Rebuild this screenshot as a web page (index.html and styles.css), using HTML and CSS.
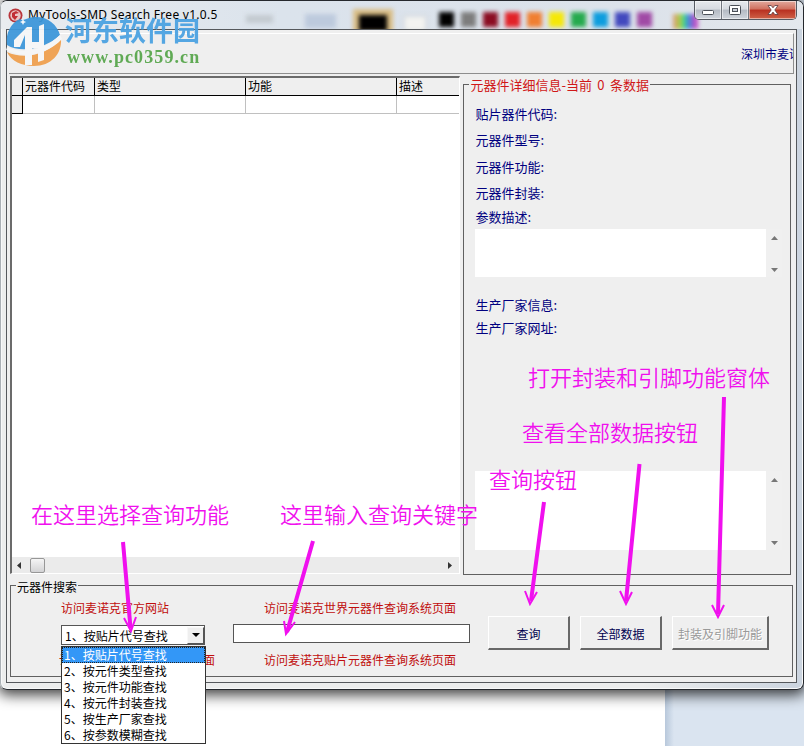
FILE: index.html
```html
<!DOCTYPE html>
<html lang="zh-CN">

<head>
  <meta charset="utf-8">
  <title>MyTools-SMD Search Free v1.0.5</title>
  <link rel="stylesheet" href="styles.css">
</head>

<body>
  <div class="desktop-side"></div>

  <div class="window">
    <div class="titlebar">
      <div class="glass">
        <span class="smudge"></span>
        <span class="smudge wide"></span>
        <span class="picked"></span>
        <span class="blank"></span>
        <div class="swatches">
          <span class="black"></span>
          <span class="gray"></span>
          <span class="maroon"></span>
          <span class="red"></span>
          <span class="orange"></span>
          <span class="yellow"></span>
          <span class="green"></span>
          <span class="cyan"></span>
          <span class="indigo"></span>
          <span class="purple"></span>
        </div>
        <span class="rainbow"></span>
      </div>
      <svg class="app-icon" width="15" height="15" viewBox="0 0 15 15">
        <circle cx="7.5" cy="7.5" r="7" fill="#b9353b"/>
        <circle cx="7.5" cy="7.5" r="5.2" fill="#e9c5c6"/>
        <path d="M4 5l4-2 3 2-4 1 0 2 3 0-3 4-3-3z" fill="#c22c35"/>
      </svg>
      <div class="title">MyTools-SMD Search Free v1.0.5</div>
      <div class="caption-buttons">
        <div class="caption-button min">
          <svg width="13" height="6" viewBox="0 0 13 6"><rect x=".5" y=".5" width="11" height="4" rx="1" fill="#fff" stroke="#4b5058"/></svg>
        </div>
        <div class="caption-button max">
          <svg width="12" height="10" viewBox="0 0 12 10"><rect x=".5" y=".5" width="11" height="9" rx="1" fill="#fff" stroke="#4b5058"/><rect x="3.5" y="3.5" width="5" height="3" fill="#c9ced6" stroke="#4b5058"/></svg>
        </div>
        <div class="caption-button close">
          <svg width="12" height="10" viewBox="0 0 12 10"><path d="M1 .5h3.200L6 2.800 7.800 .5H11L7.800 5l3.200 4.500H7.800L6 7.100 4.200 9.500H1L4.200 5z" fill="#fff" stroke="#5a3a3e" stroke-width=".8"/></svg>
        </div>
      </div>
    </div>

    <div class="client">
      <div class="banner"><span class="company">深圳市麦诺</span></div>

      <div class="main">
        <div class="grid">
          <div class="grid-row head">
            <div></div>
            <div>元器件代码</div>
            <div>类型</div>
            <div>功能</div>
            <div>描述</div>
          </div>
          <div class="grid-row">
            <div></div>
            <div></div>
            <div></div>
            <div></div>
            <div></div>
          </div>
          <div class="grid-space"></div>
          <div class="hscroll">
            <svg width="4" height="7" viewBox="0 0 4 7"><path d="M4 0v7L0 3.5z" fill="#333"/></svg>
            <span class="thumb"></span>
            <svg width="4" height="7" viewBox="0 0 4 7"><path d="M0 0v7l4-3.5z" fill="#333"/></svg>
          </div>
        </div>

        <div class="group details">
          <div class="legend">元器件详细信息-当前 0 条数据</div>
          <div class="label">贴片器件代码:</div>
          <div class="label">元器件型号:</div>
          <div class="label">元器件功能:</div>
          <div class="label">元器件封装:</div>
          <div class="label short">参数描述:</div>
          <div class="memo">
            <div class="memo-text"></div>
            <div class="vscroll">
              <svg width="7" height="4" viewBox="0 0 7 4"><path d="M0 4h7L3.500 0z" fill="#777"/></svg>
              <svg width="7" height="4" viewBox="0 0 7 4"><path d="M0 0h7L3.500 4z" fill="#777"/></svg>
            </div>
          </div>
          <div class="label maker">生产厂家信息:</div>
          <div class="label maker">生产厂家网址:</div>
          <div class="memo tall">
            <div class="memo-text"></div>
            <div class="vscroll">
              <svg width="7" height="4" viewBox="0 0 7 4"><path d="M0 4h7L3.500 0z" fill="#777"/></svg>
              <svg width="7" height="4" viewBox="0 0 7 4"><path d="M0 0h7L3.500 4z" fill="#777"/></svg>
            </div>
          </div>
        </div>
      </div>

      <div class="group search">
        <div class="legend">元器件搜索</div>
        <div class="search-col mode">
          <div class="link">访问麦诺克官方网站</div>
          <div class="select">
            <span>1、按贴片代号查找</span>
            <div class="select-button">
              <svg width="8" height="4" viewBox="0 0 8 4"><path d="M0 0h8L4 4z" fill="#000"/></svg>
            </div>
            <div class="options">
              <div class="option selected">1、按贴片代号查找</div>
              <div class="option">2、按元件类型查找</div>
              <div class="option">3、按元件功能查找</div>
              <div class="option">4、按元件封装查找</div>
              <div class="option">5、按生产厂家查找</div>
              <div class="option">6、按参数模糊查找</div>
            </div>
          </div>
          <div class="link last">访问麦诺克元件查询系统页面</div>
        </div>
        <div class="search-col keyword">
          <div class="link">访问麦诺克世界元器件查询系统页面</div>
          <div class="input"></div>
          <div class="link last">访问麦诺克贴片元器件查询系统页面</div>
        </div>
        <div class="buttons">
          <div class="button">查询</div>
          <div class="button">全部数据</div>
          <div class="button disabled">封装及引脚功能</div>
        </div>
      </div>
    </div>
  </div>

  <!-- site watermark -->
  <div class="watermark">
    <svg width="58" height="54" viewBox="0 0 58 54">
      <path d="M2 31C0 16 9 7 15 5c3 3 8-2 14-2 13-1 23 7 26 18C42 34 16 40 2 31z" fill="#3d97da"/>
      <path d="M2 38c17 8 40 3 54-13 1 15-10 27-27 27C17 52 6 47 2 38z" fill="#f0a04e"/>
      <path d="M9 26L22 13h5v15h7V12l5-2v36l-6 2V34h-6v17h-7V21l-5 12H9z" fill="#f6f7f8"/>
      <path d="M2 33c16 8 38 3 53-12l2 4C42 41 18 45 1 36z" fill="#f6f7f8"/>
      <path d="M18 5l1 2 2 1-2 1-1 2-1-2-2-1 2-1z" fill="#f5f8fb"/>
    </svg>
    <div class="watermark-text">
      <div class="watermark-name">河东软件园</div>
      <div class="watermark-url">www.pc0359.cn</div>
    </div>
  </div>

  <!-- callouts drawn over the window -->
  <div class="note note-mode">在这里选择查询功能</div>
  <div class="note note-keyword">这里输入查询关键字</div>
  <div class="note note-query">查询按钮</div>
  <div class="note note-all">查看全部数据按钮</div>
  <div class="note note-package">打开封装和引脚功能窗体</div>
  <svg class="arrows" width="804" height="746" viewBox="0 0 804 746">
    <path d="M123 542L130.500 628M313 541L287 632M544 502L531 601M639.500 464L626 601M724 397L718 614"/>
    <path class="tip" d="M124 618l7 13 5-14M284 621l2 13 9-12M525 591l5 13 7-12M620 591l6 13 6-12M712 605l6 12 6-12"/>
  </svg>
</body>

</html>
```
FILE: styles.css
```css
* {
  margin: 0;
  padding: 0;
  box-sizing: border-box;
}

body {
  position: relative;
  width: 804px;
  height: 746px;
  overflow: hidden;
  background: #fff;
  font-family: "Noto Sans CJK SC", sans-serif;
  font-size: 12px;
  color: #000;
}

svg {
  display: block;
}

.desktop-side {
  position: absolute;
  left: 665px;
  right: 0;
  top: 0;
  bottom: 0;
  background: linear-gradient(90deg, #b8c8db, #dae4f0 9px);
}

/* window frame */
.window {
  position: relative;
  width: 804px;
  height: 690px;
  border: 1px solid #25282d;
  border-left-color: #aab0b5;
  border-radius: 7px;
  background: linear-gradient(90deg, #eceded 0, #eceded 80%, #cbd4df);
  box-shadow: 0 3px 14px 2px rgba(0, 0, 0, 0.75), inset 0 0 0 1px #f7f8f9;
}

.titlebar {
  position: relative;
  display: flex;
  align-items: flex-start;
  height: 28px;
  padding-left: 7px;
  overflow: hidden;
  border-radius: 6px 6px 0 0;
  background: linear-gradient(90deg, #e9ecef, #dbe3ec 35%, #dce2ea 80%, #e4e8ed);
}

.glass {
  position: absolute;
  left: 0;
  top: 0;
  width: 100%;
  height: 28px;
  display: flex;
  align-items: flex-start;
  padding: 10px 0 0 245px;
  filter: blur(2px);
}

.glass span {
  flex-shrink: 0;
}

.smudge {
  width: 27px;
  height: 8px;
  margin: 4px 32px 0 0;
  background: #c3cad0;
}

.smudge.wide {
  width: 31px;
  height: 14px;
  margin: 3px 17px 0 0;
  background: #bdcadd;
}

.picked {
  width: 40px;
  height: 28px;
  margin: -2px 10px 0 0;
  border: 6px solid #d9bd85;
  background: #000;
}

.blank {
  width: 24px;
  height: 17px;
  margin: 4px 12px 0 0;
  border: 2px solid #d5dadf;
  background: #f3f3f1;
}

.swatches {
  display: flex;
  gap: 7px;
  margin: 1px 21px 0 0;
}

.swatches span {
  width: 15px;
  height: 15px;
}

.black { background: #000; }
.gray { background: #7d7d7d; }
.maroon { background: #8b0c22; }
.red { background: #e12228; }
.orange { background: #f07f31; }
.yellow { background: #f5e807; }
.green { background: #25aa4e; }
.cyan { background: #0d9dde; }
.indigo { background: #4249be; }
.purple { background: #a04aa5; }

.rainbow {
  width: 25px;
  height: 15px;
  margin-top: 3px;
  background: linear-gradient(90deg, #e09a78, #a6cf45 30%, #3bd597 45%, #4587dd 62%, #c44bc5 90%);
}

.app-icon {
  position: relative;
  margin-top: 7px;
}

.title {
  position: relative;
  margin-left: 5px;
  font-family: "Noto Sans", "Open Sans", sans-serif;
  font-size: 12px;
  letter-spacing: 0.280px;
  line-height: 28px;
  white-space: nowrap;
}

.caption-buttons {
  position: relative;
  display: flex;
  width: 103px;
  height: 19px;
  margin: 0 6px 0 auto;
  border: 1px solid #555a62;
  border-top: none;
  border-radius: 0 0 5px 5px;
  overflow: hidden;
}

.caption-button {
  display: flex;
  align-items: center;
  justify-content: center;
  width: 27px;
  border-right: 1px solid #72777f;
  background: linear-gradient(#e6e9ed 0, #d6dae0 45%, #b4bac3 50%, #d0d5dc);
  box-shadow: inset 0 0 0 1px rgba(255, 255, 255, 0.5);
}

.caption-button.min svg {
  margin-top: 5px;
}

.caption-button.close {
  flex: 1;
  border: none;
  background: linear-gradient(#e3a99d 0, #d0705f 45%, #b83020 50%, #cf6248);
}

/* client area */
.client {
  display: flex;
  flex-direction: column;
  width: 791px;
  height: 654px;
  margin-left: 5px;
  padding: 3px 2px 0;
  border: 1px solid #55585c;
  background: #efefef;
}

.banner {
  display: flex;
  align-items: center;
  justify-content: flex-start;
  height: 41px;
  padding-left: 732px;
  overflow: hidden;
  border-top: 1px solid #fff;
  border-right: 1px solid #8e8e8e;
  border-bottom: 1px solid #8e8e8e;
}

.company {
  width: 53px;
  overflow: hidden;
  white-space: nowrap;
  color: #000080;
}

.main {
  display: flex;
  height: 500px;
  padding: 2px 3px 0 1px;
}

.grid {
  display: flex;
  flex-direction: column;
  width: 451px;
  height: 498px;
  border: 2px solid #6b6b6b;
  border-right: 1px solid #fff;
  border-bottom: 1px solid #fff;
  background: #fff;
}

.grid-row {
  display: grid;
  grid-template-columns: 11px 72px 151px 151px 1fr;
  height: 18px;
}

.grid-row > div {
  padding-left: 2px;
  border-right: 1px solid #c0c0c0;
  border-bottom: 1px solid #c0c0c0;
  line-height: 16px;
  white-space: nowrap;
}

.grid-row.head > div,
.grid-row > div:first-child {
  border-color: #000;
  background: #efefef;
}

.grid-row > div:last-child {
  border-right: none;
}

.grid-space {
  flex: 1;
}

.hscroll {
  display: flex;
  align-items: center;
  height: 16px;
  padding: 0 7px 0 5px;
  background: #ebebeb;
}

.thumb {
  width: 15px;
  height: 15px;
  margin: 0 auto 0 9px;
  border: 1px solid #979797;
  border-radius: 2px;
  background: linear-gradient(#f5f5f5, #d3d3d5);
}

.group {
  position: relative;
  border: 1px solid #606060;
}

/* the caption sits on the frame line */
.legend {
  position: absolute;
  left: 5px;
  top: -8px;
  height: 18px;
  padding: 0 1px;
  line-height: 18px;
  background: #efefef;
  white-space: nowrap;
}

.details {
  width: 328px;
  height: 491px;
  margin: 8px 0 0 3px;
  padding: 16px 0 0 11px;
  font-size: 13px;
  color: #000080;
}

.details .legend {
  top: -9px;
  word-spacing: 2.500px;
  color: #d01818;
}

.label {
  height: 26.400px;
  line-height: 25px;
}

.label.short {
  height: 22px;
  line-height: 19px;
}

.memo {
  display: flex;
  height: 48px;
  margin: 0 0 16px;
}

.memo.tall {
  height: 79px;
  margin: 132px 0 0;
}

.memo-text {
  width: 291px;
  background: #fff;
}

.vscroll {
  display: flex;
  flex-direction: column;
  align-items: center;
  justify-content: space-between;
  width: 16px;
  padding: 7px 0 5px;
  background: #f0f0f0;
}

.label.maker {
  height: 23px;
  line-height: 23px;
}

/* search box */
.search {
  display: flex;
  width: 783px;
  height: 92px;
  margin: 11px 0 0 1px;
}

.search-col {
  display: flex;
  flex-direction: column;
  padding-top: 13px;
}

.link {
  height: 18px;
  line-height: 18px;
  color: #c00d0d;
  white-space: nowrap;
}

.link.last {
  margin-top: auto;
  margin-bottom: 7px;
}

.mode {
  width: 144px;
  margin-left: 50px;
}

.mode .link.last {
  margin-left: -2px;
}

.select {
  position: relative;
  display: flex;
  align-items: center;
  justify-content: space-between;
  height: 20px;
  margin-top: 8px;
  padding-left: 3px;
  border: 1px solid #555;
  background: #fff;
  white-space: nowrap;
}

.select-button {
  display: flex;
  align-items: center;
  justify-content: center;
  width: 17px;
  height: 17px;
  border: 1px solid #f8f8f8;
  border-right-color: #555;
  border-bottom-color: #555;
  background: #efefef;
}

.options {
  position: absolute;
  left: -1px;
  top: 20px;
  width: 145px;
  height: 98px;
  border: 1px solid #333;
  background: #fff;
}

.option {
  height: 16px;
  padding-left: 2px;
  line-height: 15px;
}

.option.selected {
  outline: 1px dotted #222;
  outline-offset: -1px;
  background: #3397f7;
  color: #fff;
}

.keyword {
  width: 237px;
  margin-left: 28px;
}

.keyword .link {
  margin-left: 31px;
}

.input {
  height: 19px;
  margin-top: 7px;
  border: 1px solid #555;
  background: #fff;
}

.buttons {
  display: flex;
  gap: 10px;
  height: 34px;
  margin: 30px 0 0 18px;
}

.button {
  width: 82px;
  border: 1px solid #fff;
  border-right: 2px solid #686868;
  border-bottom: 2px solid #686868;
  line-height: 33px;
  text-align: center;
  color: #000050;
}

.button.disabled {
  width: 97px;
  color: #999;
  text-shadow: 1px 1px #fff;
}

/* watermark */
.watermark {
  position: absolute;
  left: 5px;
  top: 14px;
  display: flex;
  opacity: 0.94;
}

.watermark-text {
  margin: 0 0 0 2px;
}

.watermark-name {
  height: 33px;
  line-height: 31px;
  font-size: 27px;
  font-weight: 700;
  color: #4ba2e2;
}

.watermark-url {
  margin-left: 2px;
  font-family: "Liberation Serif", serif;
  font-size: 18px;
  font-weight: 700;
  line-height: 20px;
  letter-spacing: 1.100px;
  color: #58a64c;
}

/* callouts */
.note {
  position: absolute;
  font-size: 22px;
  font-weight: 350;
  line-height: 30px;
  white-space: nowrap;
  color: #f010ee;
}

.note-mode {
  left: 31px;
  top: 498px;
}

.note-keyword {
  left: 280px;
  top: 498px;
}

.note-query {
  left: 489px;
  top: 463px;
}

.note-all {
  left: 522px;
  top: 416px;
}

.note-package {
  left: 528px;
  top: 361px;
}

.arrows {
  position: absolute;
  left: 0;
  top: 0;
  fill: none;
  stroke: #f010ee;
  stroke-width: 4;
}

.arrows .tip {
  stroke-width: 2;
}
```
